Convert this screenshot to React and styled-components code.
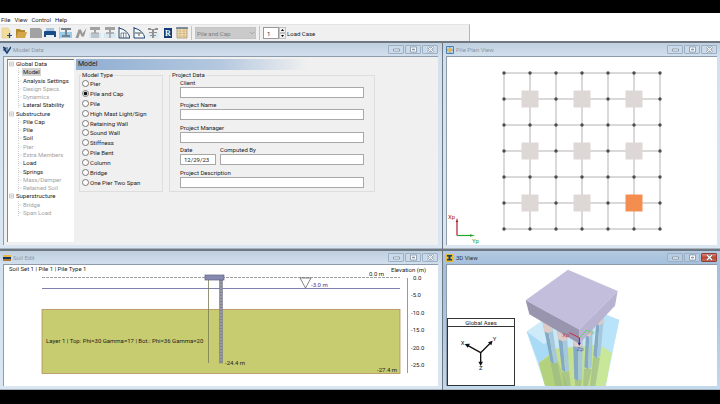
import React, { useState } from 'react';
import styled, { createGlobalStyle } from 'styled-components';

const GlobalStyle = createGlobalStyle`
  * { box-sizing: border-box; }
  body { margin: 0; background: #000; }
  body, button, input, select { font-family: Roboto, "Open Sans", sans-serif; font-size: 6px; color: #1c1c1c; }
`;

const Screen = styled.div`
  display: flex;
  flex-direction: column;
  min-height: 100vh;
  padding: 13px 0 14px;
  background: #000;
`;

const MenuBar = styled.nav`
  display: flex;
  gap: 4px;
  height: 11px;
  padding: 2px 1px 0;
  background: #fff;
`;

const MenuItem = styled.button`
  padding: 0;
  border: 0;
  background: none;
  line-height: 9px;
`;

const ToolStrip = styled.div`
  display: flex;
  height: 17px;
  background: #fff;
`;

const Toolbar = styled.div`
  display: flex;
  align-items: center;
  flex: 0 0 470px;
  gap: 3px;
  padding-left: 1px;
  border-right: 1px solid #b5b5b5;
  border-top: 1px solid #e4e4e4;
  background: #f0f0f0;
`;

const ToolGroup = styled.div`
  display: flex;
  justify-content: space-between;
  flex: 0 0 ${(p) => p.$width}px;
  border-left: ${(p) => (p.$ruled ? '1px solid #c4c4c4' : '0')};
`;

const ToolButton = styled.button`
  width: 12px;
  height: 12px;
  padding: 0;
  border: 0;
  background: none;
  svg { display: block; width: 12px; height: 12px; }
`;

const Divider = styled.span`
  width: 1px;
  height: 14px;
  background: #c4c4c4;
`;

const CaseSelect = styled.select`
  width: 61px;
  height: 12px;
  padding: 0 1px;
  appearance: none;
  border: 1px solid #c4c4c4;
  border-radius: 0;
  opacity: 1;
  color: #808080;
  background: #cacaca;
`;

const SelectBox = styled.div`
  display: flex;
  align-items: center;
  svg { width: 4px; height: 3px; margin-left: -6px; margin-right: 2px; }
`;

const Spinner = styled.div`
  display: flex;
  align-items: center;
`;

const SpinInput = styled.input`
  width: 16px;
  height: 12px;
  padding: 0 3px;
  border: 1px solid #9a9a9a;
  background: #fff;
`;

const SpinButtons = styled.div`
  display: grid;
  width: 7px;
  height: 12px;
  margin-right: 1px;
`;

const SpinButton = styled.button`
  display: grid;
  place-items: center;
  height: 6px;
  padding: 0;
  border: 1px solid #c2c2c2;
  background: #f0f0f0;
  svg { width: 3px; height: 2px; }
`;

const Workspace = styled.main`
  display: grid;
  grid-template-columns: minmax(0, 443fr) minmax(0, 277fr);
  grid-template-rows: 208px 141px;
  background: #6d7883;
`;

const WindowFrame = styled.section`
  display: flex;
  flex-direction: column;
  min-width: 0;
  margin-right: ${(p) => (p.$edge ? 0 : 1)}px;
  padding: 0 ${(p) => (p.$edge ? 3 : 4)}px 3px 3px;
  border-top: 2px solid #6d7883;
  border-bottom: 1px solid #a9b4bf;
  background: ${(p) => (p.$active
    ? 'linear-gradient(#b4cae1, #a3bfdc 14px, #a9c5e2 60px, #c2d9ee)'
    : 'linear-gradient(#c0cfde, #d3e1ef 14px, #dae7f3)')};
`;

const TitleBar = styled.header`
  display: flex;
  align-items: center;
  flex: 0 0 13px;
  gap: 2px;
`;

const TitleIcon = styled.svg`
  width: 8px;
  height: 8px;
`;

const Title = styled.h2`
  flex: 1;
  margin: 0;
  font-size: 6px;
  font-weight: 400;
  color: ${(p) => (p.$active ? '#2c3540' : '#8c98a5')};
`;

const CaptionButton = styled.button`
  display: grid;
  place-items: center;
  width: 16px;
  height: 9px;
  margin-left: -1px;
  padding: 0;
  border: 1px solid ${(p) => (p.$danger ? '#8c4038' : '#9db0c4')};
  border-radius: 1px;
  background: ${(p) => (p.$danger ? 'linear-gradient(#d98877, #c04630 50%, #cc6750)' : p.$active ? '#b6cce3' : '#cbdaea')};
  svg { width: 9px; height: 7px; }
`;

const Pane = styled.div`
  position: relative;
  flex: 1;
  min-height: 0;
  overflow: hidden;
  border-top: 1px solid #8e9baa;
  border-left: 1px solid #8e9baa;
  background: ${(p) => (p.$form ? '#f0f0f0' : '#fff')};
`;

const Drawing = styled.svg`
  display: block;
  width: 100%;
  height: 100%;
`;

const ModelLayout = styled.div`
  display: flex;
  gap: 2px;
  height: 100%;
  padding: 2px 0 3px 3px;
`;

const Tree = styled.nav`
  flex: 0 0 67px;
  border-top: 1px solid #777;
  border-left: 1px solid #888;
  background: #fff;
`;

const TreeList = styled.ul`
  display: grid;
  grid-template-rows: repeat(19, minmax(0, 1fr));
  height: 157px;
  margin: 0;
  padding: 0 0 0 1px;
  list-style: none;
`;

const TreeRow = styled.li`
  display: flex;
  align-items: center;
  gap: ${(p) => (p.$branch ? 1 : 0)}px;
  padding-left: ${(p) => (p.$branch ? 0 : 9)}px;
  svg { flex: none; width: ${(p) => (p.$branch ? 5 : 4)}px; height: 8px; }
`;

const TreeLink = styled.a`
  padding: 0 1px;
  line-height: 8px;
  white-space: nowrap;
  text-decoration: none;
  color: ${(p) => (p.$muted ? '#a3a3a3' : '#1c1c1c')};
  background: ${(p) => (p.$selected ? '#d4d4d4' : 'transparent')};
`;

const FormArea = styled.div`
  flex: 1;
  min-width: 0;
`;

const FormHeading = styled.h1`
  height: 11px;
  margin: 0;
  padding-left: 2px;
  font-size: 7px;
  font-weight: 400;
  line-height: 11px;
  background: linear-gradient(90deg, #8faed2, #b4c8df 40%, #f0f0f0 64%);
`;

const Groups = styled.div`
  display: flex;
  gap: 6px;
  padding: 1px 3px;
`;

const Group = styled.fieldset`
  flex: 0 1 ${(p) => p.$width}px;
  min-width: 0;
  margin: 0;
  padding: 0;
  border: 1px solid #dedede;
`;

const Legend = styled.legend`
  margin-left: 1px;
  padding: 0 1px;
  line-height: 8px;
`;

const RadioList = styled.div`
  display: grid;
  grid-template-rows: repeat(11, 1fr);
  height: 108px;
  padding-left: 2px;
`;

const RadioLabel = styled.label`
  display: flex;
  align-items: center;
  gap: 1px;
  white-space: nowrap;
`;

const Radio = styled.input`
  width: 7px;
  height: 7px;
  margin: 0;
  appearance: none;
  border: 1px solid #7a7a7a;
  border-radius: 50%;
  background: #fff;
  &:checked { background: radial-gradient(circle closest-side, #111 55%, #fff 90%); }
`;

const FieldRows = styled.div`
  display: grid;
  grid-template-rows: repeat(5, 1fr);
  height: 112px;
  padding: 0 10px;
`;

const FieldRow = styled.div`
  display: flex;
  gap: 4px;
`;

const Field = styled.label`
  display: flex;
  flex-direction: column;
  flex: ${(p) => (p.$narrow ? '0 0 36px' : '1')};
  line-height: 8px;
  white-space: nowrap;
`;

const TextInput = styled.input`
  width: 100%;
  height: 11px;
  padding: 0 3px;
  border: 1px solid #a8a8a8;
  background: #fff;
`;

const AxesPanel = styled.figure`
  position: absolute;
  left: 0;
  bottom: 0;
  width: 68px;
  margin: 0;
  border: 1px solid #333;
  background: #fff;
  svg { display: block; width: 66px; height: 58px; }
`;

const AxesCaption = styled.figcaption`
  border-bottom: 1px solid #333;
  line-height: 7px;
  text-align: center;
`;

const Cap = () => <path d="M1 0h10v3H7v3H5V3H1z" fill="#a2a2a2" />;

const TOOLS = {
  'New': <><path d="M1 1h6l2 3v7H1z" fill="#f2dc9c" stroke="#dcc27a" strokeWidth=".5" /><path d="M8.500 6v5M6 8.500h5" stroke="#23517f" strokeWidth="1.200" /></>,
  'Open': <><path d="M1 2h4l1 1h4v8H1z" fill="#b3892d" /><path d="M3 5h9l-2 6H1z" fill="#d4a849" /></>,
  'Save': <path d="M0 1h10l2 2v8H0z" fill="#a2a2a2" />,
  'Print': <><path d="M2 1h8v4H2z" fill="#a9c2dd" /><path d="M1 4h10q1 0 1 1v5H0V5q0-1 1-1z" fill="#174b87" /><path d="M2 8h8v3H2z" fill="#e6eff8" /></>,
  'Pile and cap': <><path d="M0 5h12v6H0z" fill="#9bcbea" /><path d="M1 1h10v2H7v5h3v2H2V8h3V3H1z" fill="#75828d" /></>,
  'Pier': <path d="M.5 11L3.500 2.500h2.500l1.500 4L11.500 1 9 9.500H6.500L5 6l-1.500 5z" fill="#999" />,
  'Pile group': <><path d="M0 6h12v5H0z" fill="#d5e9f4" /><Cap /><path d="M2 6h8M3 6v5M5 6v5M7 6v5M9 6v5" stroke="#a2a2a2" /></>,
  'Single cap': <><path d="M0 6h12v5H0z" fill="#d5e9f4" /><Cap /><path d="M2 6h8M6 6v5" stroke="#a2a2a2" strokeWidth="1.500" /></>,
  'Pile curves': <><path d="M1 0v11h11Q10 3 1 1" fill="#f7fafc" stroke="#23426b" /><path d="M3 6h5M3 6v5M5.500 6v5M8 6v5" stroke="#66727f" strokeWidth=".8" /></>,
  'Cap curve': <><path d="M1 0v11h11Q10 3 1 1" fill="#f7fafc" stroke="#23426b" /><path d="M2 6h7M6 6v3" stroke="#8b8b8b" strokeWidth="1.500" /></>,
  'Springs': <><path d="M0 6h12v5H0z" fill="#dfebf2" /><path d="M1 1h3v1h4V1h3v2H7v2h3v1H7v2h2v1H7v2H5V9H3V8h2V6H2V5h3V3H1z" fill="#929292" /></>,
  'Results': <><path d="M2 1h8v10H2z" fill="#123c75" /><text x="6" y="9" textAnchor="middle" fontFamily="Liberation Serif" fontSize="8" fontWeight="700" fill="#fff">R</text></>,
  'Table': <><path d="M1 1h10v10H1z" fill="#f5deb0" stroke="#9a8c6b" strokeWidth=".7" /><path d="M1 4h10M1 6.500h10M1 9h10M4 1v10M8 1v10" stroke="#c1a97b" strokeWidth=".6" /><path d="M0 1h12" stroke="#28517c" /></>,
};

const TITLE_ICONS = {
  model: <><path d="M0 1h5v4H0z" fill="#8295ad" /><path d="M0 1l3 2M1 3l3 4 4-6" stroke="#153d70" strokeWidth="1.500" fill="none" /></>,
  plan: <><path d="M.5.5h7v7h-7z" fill="#b5d4ed" stroke="#4d80ae" /><path d="M4 0v8M0 4h8" stroke="#4472a0" strokeWidth=".6" /><circle cx="4" cy="4" r="2" fill="#edb747" /></>,
  soil: <><path d="M0 1h8v2H0z" fill="#e7b940" /><path d="M0 3h8v2H0z" fill="#16345f" /><path d="M0 5h8v2H0z" fill="#b07931" /></>,
  view: <><path d="M0 0h7v8H0z" fill="#e8b92f" /><path d="M1 1h5v1.500H4.500V5H6v1.500H1V5h1.500V2.500H1z" fill="#173d69" /></>,
};

const TREE = [
  ['Global Data', 'branch'], ['Model', 'selected'], ['Analysis Settings'], ['Design Specs.', 'muted'], ['Dynamics', 'muted'], ['Lateral Stability'],
  ['Substructure', 'branch'], ['Pile Cap'], ['Pile'], ['Soil'], ['Pier', 'muted'], ['Extra Members', 'muted'], ['Load'], ['Springs'], ['Mass/Damper', 'muted'], ['Retained Soil', 'muted'],
  ['Superstructure', 'branch'], ['Bridge', 'muted'], ['Span Load', 'muted'],
];

const MODEL_TYPES = ['Pier', 'Pile and Cap', 'Pile', 'High Mast Light/Sign', 'Retaining Wall', 'Sound Wall', 'Stiffness', 'Pile Bent', 'Column', 'Bridge', 'One Pier Two Span'];

function ToolButtons({ names }) {
  return names.map((name) => (
    <ToolButton key={name} type="button" aria-label={name}>
      <svg viewBox="0 0 12 12">{TOOLS[name]}</svg>
    </ToolButton>
  ));
}

function AppWindow({ title, icon, active, edge, form, children }) {
  const ink = active ? '#fff' : '#f6f9fc';
  return (
    <WindowFrame $active={active} $edge={edge} aria-label={title}>
      <TitleBar>
        <TitleIcon viewBox="0 0 8 8">{TITLE_ICONS[icon]}</TitleIcon>
        <Title $active={active}>{title}</Title>
        <CaptionButton type="button" aria-label="Minimize" $active={active}>
          <svg viewBox="0 0 9 7"><path d="M1.500 3h6v2h-6z" fill={ink} stroke="#65758a" strokeWidth=".6" /></svg>
        </CaptionButton>
        <CaptionButton type="button" aria-label="Maximize" $active={active}>
          <svg viewBox="0 0 9 7"><path d="M1.500 1h6v5h-6z" fill={ink} stroke="#65758a" strokeWidth=".6" /><path d="M3.500 3h2v1h-2z" fill="#b9c9da" stroke="#65758a" strokeWidth=".6" /></svg>
        </CaptionButton>
        <CaptionButton type="button" aria-label="Close" $active={active} $danger={active}>
          <svg viewBox="0 0 9 7"><path d="M2 1l5 5M7 1L2 6" stroke="#536273" strokeWidth="2.200" /><path d="M2 1l5 5M7 1L2 6" stroke={ink} strokeWidth="1.300" /></svg>
        </CaptionButton>
      </TitleBar>
      <Pane $form={form}>{children}</Pane>
    </WindowFrame>
  );
}

function ModelTree() {
  return (
    <Tree aria-label="Model data">
      <TreeList>
        {TREE.map(([name, kind], i) => (
          <TreeRow key={`${name}-${i}`} $branch={kind === 'branch'}>
            {kind === 'branch'
              ? <svg viewBox="0 0 5 5"><path d="M.5.5h4v4h-4z" fill="#fff" stroke="#aaa" strokeWidth=".6" /><path d="M1.500 2.500h2" stroke="#555" strokeWidth=".6" /></svg>
              : <svg viewBox="0 0 4 8"><path d="M.5 0v8M.5 4H4" stroke="#bbb" strokeWidth=".7" strokeDasharray="1 1" fill="none" /></svg>}
            <TreeLink href="#" $muted={kind === 'muted'} $selected={kind === 'selected'}>{name}</TreeLink>
          </TreeRow>
        ))}
      </TreeList>
    </Tree>
  );
}

function TextField({ label, narrow, value = '' }) {
  return (
    <Field $narrow={narrow}>
      {label}
      <TextInput type="text" defaultValue={value} />
    </Field>
  );
}

function ModelForm() {
  const [type, setType] = useState('Pile and Cap');
  return (
    <FormArea>
      <FormHeading>Model</FormHeading>
      <Groups>
        <Group $width={84}>
          <Legend>Model Type</Legend>
          <RadioList>
            {MODEL_TYPES.map((name) => (
              <RadioLabel key={name}>
                <Radio type="radio" name="model-type" checked={type === name} onChange={() => setType(name)} />
                {name}
              </RadioLabel>
            ))}
          </RadioList>
        </Group>
        <Group $width={206}>
          <Legend>Project Data</Legend>
          <FieldRows>
            <FieldRow><TextField label="Client" /></FieldRow>
            <FieldRow><TextField label="Project Name" /></FieldRow>
            <FieldRow><TextField label="Project Manager" /></FieldRow>
            <FieldRow>
              <TextField label="Date" narrow value="12/29/23" />
              <TextField label="Computed By" />
            </FieldRow>
            <FieldRow><TextField label="Project Description" /></FieldRow>
          </FieldRows>
        </Group>
      </Groups>
    </FormArea>
  );
}

const GRID = [0, 1, 2, 3, 4, 5, 6];

function PilePlan() {
  return (
    <Drawing viewBox="447 57 270 188" role="img" aria-label="Pile plan">
      {GRID.map((i) => (
        <path key={i} d={`M504 ${73 + i * 26}H660M${504 + i * 26} 73V229`} stroke="#b3b3b3" strokeWidth="1" />
      ))}
      {GRID.flatMap((r) => GRID.map((c) => (
        r % 2 && c % 2
          ? <rect key={`${r}${c}`} x={495.500 + c * 26} y={64.500 + r * 26} width="17" height="17" fill={r === 5 && c === 5 ? '#f48e50' : '#ddd8d6'} />
          : <circle key={`${r}${c}`} cx={504 + c * 26} cy={73 + r * 26} r="1.700" fill="#4d4d4d" />
      )))}
      <path d="M457 235.500V221" stroke="#a51f2b" strokeWidth="1.200" />
      <path d="M455.800 222l1.200-4 1.200 4z" fill="#a51f2b" />
      <path d="M457 235.500h14" stroke="#27a52c" strokeWidth="1.200" />
      <path d="M470 234.200l5 1.300-5 1.300z" fill="#27a52c" />
      <text x="448" y="219" fontSize="6" fill="#a51f2b">Xp</text>
      <text x="472" y="243" fontSize="6" fill="#27a52c">Yp</text>
    </Drawing>
  );
}

const LEVELS = ['0.0', '-5.0', '-10.0', '-15.0', '-20.0', '-25.0'];

function SoilProfile() {
  return (
    <Drawing viewBox="4 265 434 121" role="img" aria-label="Soil profile" fontSize="6" fill="#222">
      <rect x="42" y="309.500" width="358" height="64" fill="#c8cc70" stroke="#b5905c" strokeWidth=".8" />
      <path d="M42 277.500H400" stroke="#888" strokeWidth=".8" strokeDasharray="3 1" />
      <path d="M42 288.500H400" stroke="#8080ae" />
      <path d="M208.500 279v84" stroke="#777b55" strokeWidth=".8" />
      <rect x="219.500" y="279" width="3" height="84" fill="#9899a5" stroke="#77798a" strokeWidth=".6" />
      <path d="M221 280v83" stroke="#666878" strokeDasharray="1 2" />
      <rect x="205" y="275" width="19" height="5" fill="#8889b0" stroke="#606183" strokeWidth=".7" />
      <path d="M300 278h11l-5.500 10z" fill="none" stroke="#666" strokeWidth=".8" />
      <text x="9" y="271">Soil Set 1 | Pile 1 | Pile Type 1</text>
      <text x="46" y="343">Layer 1 | Top: Phi=30 Gamma=17 | Bot.: Phi=36 Gamma=20</text>
      <text x="225" y="365">-24.4 m</text>
      <text x="377" y="372">-27.4 m</text>
      <text x="369" y="276">0.0 m</text>
      <text x="311" y="287" fill="#3838a0">-3.0 m</text>
      <text x="391" y="272">Elevation (m)</text>
      <path d="M407.500 278v95" stroke="#999" />
      {LEVELS.map((level, i) => (
        <text key={level} x={i ? 411 : 413} y={Math.round(280 + i * 17.400)}>{level}</text>
      ))}
    </Drawing>
  );
}

function StructureView() {
  return (
    <Drawing viewBox="21 57 810 363" role="img" aria-label="Three-dimensional pile cap">
      <path d="M260 257L320 216 495 205 538 222 497 422H316z" fill="#c9e8f7" />
      <path d="M260 257l36 95 48-39-18-98z" fill="#a9daf6" />
      <path d="M260 257l58-42 22 60-28 20z" fill="#cdebf8" />
      <path d="M495 205l43 17-23 98-40-20z" fill="#b9e3f8" />
      <path d="M296 352l52-44 122-12 45 24-19 102H316z" fill="#c6e08f" />
      <path d="M296 352l48-34 40 104h-68z" fill="#b4d27d" />
      <path d="M478 296l37 24-19 102h-40z" fill="#c9e798" />
      <path d="M332 352l20-2 16 72h-22zM366 378l21-3 6 47h-21zM404 400h22l-2 22h-18zM432 368l23 2-12 52h-14zM460 333l20 2-14 87h-16z" fill="#98b684" opacity=".6" />
      <path d="M308 228l14 8 20 118-10-6z" fill="#83a9c4" />
      <path d="M322 232l14 6 17 110-11 6z" fill="#a5c8da" />
      <path d="M352 254l14 8 10 117-10-6z" fill="#83a9c4" />
      <path d="M366 258l15 6 6 108-11 7z" fill="#a5c8da" />
      <path d="M399 280h15l1 125-12-7z" fill="#83a9c4" />
      <path d="M414 280h14l-2 118-11 7z" fill="#a5c8da" />
      <path d="M438 262l10 0-4 108-11-7z" fill="#83a9c4" />
      <path d="M448 262l10-10-3 111-11 7z" fill="#a5c8da" />
      <path d="M469 230l10-6-8 112-11-7z" fill="#83a9c4" />
      <path d="M479 228l13-18-11 119-10 7z" fill="#a5c8da" />
      <path d="M308 228l28 14 2 14-14 6-12-6zM352 254l29 14 1 14-14 4-14-6zM399 280h29l-1 20-13 5-14-5zM438 262l20-12-1 14-10 8-10-4zM470 226l22-16-2 20-11 8-10-4z" fill="#dccbc6" />
      <path d="M384 71L533 135 418 251 257 163z" fill="#c3bedc" />
      <path d="M257 163l161 88v42L268 205z" fill="#9a95ae" />
      <path d="M533 135L418 251v42l107-114z" fill="#b8b3d1" />
      <path d="M418 275l-30-15" stroke="#c72b40" strokeWidth="3" />
      <path d="M418 275l23-23" stroke="#57d956" strokeWidth="3" />
      <path d="M418 275v19" stroke="#2533a6" strokeWidth="3" />
      <path d="M413 290h10l-5 9z" fill="#2533a6" />
      <g fontSize="18">
        <text x="367" y="273" fill="#b74768">Xp</text>
        <text x="442" y="263" fill="#68c871">Yp</text>
        <text x="410" y="315" fill="#5665bd">Zp</text>
      </g>
    </Drawing>
  );
}

function GlobalAxes() {
  return (
    <AxesPanel>
      <AxesCaption>Global Axes</AxesCaption>
      <svg viewBox="24 243 198 174">
        <path d="M122 320L84 299M122 320l30-30M122 320v32" stroke="#111" strokeWidth="4" />
        <path d="M74 294l16-1-7 12zM158 284l-4 14-10-9zM115 347h14l-7 13z" fill="#111" />
        <g fontSize="18" fill="#222">
          <text x="62" y="296">X</text>
          <text x="158" y="285">Y</text>
          <text x="117" y="373">Z</text>
        </g>
      </svg>
    </AxesPanel>
  );
}

export default function App() {
  return (
    <Screen>
      <GlobalStyle />
      <MenuBar>
        {['File', 'View', 'Control', 'Help'].map((name) => <MenuItem key={name} type="button">{name}</MenuItem>)}
      </MenuBar>
      <ToolStrip>
        <Toolbar>
          <ToolGroup $width={55}><ToolButtons names={['New', 'Open', 'Save', 'Print']} /></ToolGroup>
          <ToolGroup $width={129} $ruled><ToolButtons names={Object.keys(TOOLS).slice(4)} /></ToolGroup>
          <Divider />
          <SelectBox>
            <CaseSelect aria-label="Model type" disabled><option>Pile and Cap</option></CaseSelect>
            <svg viewBox="0 0 4 3"><path d="M0 0l2 2 2-2" fill="none" stroke="#999" strokeWidth=".7" /></svg>
          </SelectBox>
          <Divider />
          <Spinner>
            <SpinInput id="load-case" type="text" defaultValue="1" />
            <SpinButtons>
              <SpinButton type="button" aria-label="Next load case"><svg viewBox="0 0 3 2"><path d="M0 2h3L1.500 0z" /></svg></SpinButton>
              <SpinButton type="button" aria-label="Previous load case"><svg viewBox="0 0 3 2"><path d="M0 0h3L1.500 2z" /></svg></SpinButton>
            </SpinButtons>
            <label htmlFor="load-case">Load Case</label>
          </Spinner>
        </Toolbar>
      </ToolStrip>
      <Workspace>
        <AppWindow title="Model Data" icon="model" form>
          <ModelLayout>
            <ModelTree />
            <ModelForm />
          </ModelLayout>
        </AppWindow>
        <AppWindow title="Pile Plan View" icon="plan" edge><PilePlan /></AppWindow>
        <AppWindow title="Soil Edit" icon="soil"><SoilProfile /></AppWindow>
        <AppWindow title="3D View" icon="view" active edge>
          <StructureView />
          <GlobalAxes />
        </AppWindow>
      </Workspace>
    </Screen>
  );
}
